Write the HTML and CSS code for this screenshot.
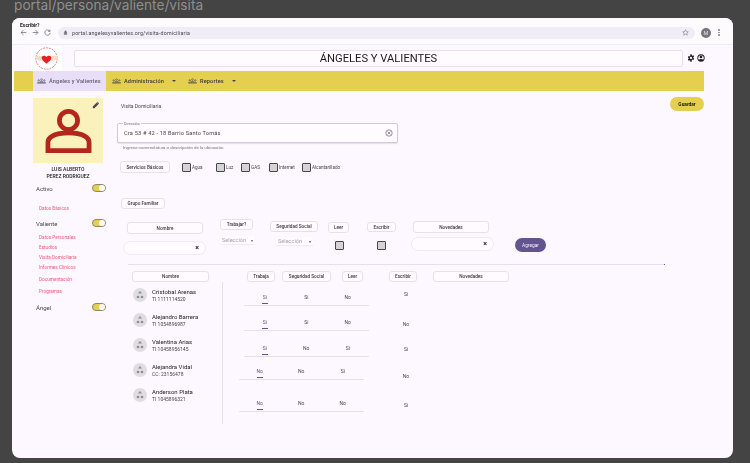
FILE: index.html
```html
<!DOCTYPE html>
<html lang="es">
<head>
  <meta charset="UTF-8">
  <title>Visita Domiciliaria</title>
  <link rel="stylesheet" href="styles.css">
</head>
<body>
  <div class="caption">portal/persona/valiente/visita</div>

  <div class="window">
    <!-- Browser bar -->
    <div class="browser-bar">
      <div class="tab-title">Escribir?</div>
      <div class="browser-nav">
        <svg viewBox="0 0 10 10"><path d="M9 5H1.5M5 1.5 1.500 5 5 8.500"/></svg>
        <svg viewBox="0 0 10 10"><path d="M1 5h7.500M5 1.500 8.500 5 5 8.500"/></svg>
        <svg viewBox="0 0 10 10"><path d="M8.300 3.200A3.800 3.800 0 1 0 8.800 5.500M8.500 1v2.500H6"/></svg>
      </div>
      <div class="address">
        <svg class="lock" viewBox="0 0 10 10"><path d="M2.500 4.500h5v4.500h-5zM3.500 4.500V3a1.500 1.500 0 0 1 3 0v1.500"/></svg>
        <span>portal.angelesyvalientes.org/visita-domiciliaria</span>
        <svg class="star" viewBox="0 0 10 10"><path d="m5 1 1.200 2.700 2.800.3-2.100 1.900.6 2.900L5 7.300 2.500 8.800l.6-2.900L1 4l2.800-.3z"/></svg>
      </div>
      <div class="user-dot">M</div>
      <div class="dots"><i></i><i></i><i></i></div>
    </div>

    <!-- Header -->
    <div class="top">
      <svg class="logo" viewBox="0 0 32 25">
        <rect width="32" height="25" fill="#fff"/>
        <circle cx="16" cy="12.500" r="11" fill="none" stroke="#e8505b" stroke-width=".8" stroke-dasharray="2 1"/>
        <path d="M4 10c4-1 7-.5 9 2-1 2-2 3-3 3-3 0-5-2-6-5zM28 10c-4-1-7-.5-9 2 1 2 2 3 3 3 3 0 5-2 6-5z" fill="#e9e2c8"/>
        <path d="M16 18c-3-2.500-5-4-5-6.200 0-2.400 3.500-3 5-.8 1.500-2.200 5-1.600 5 .8 0 2.200-2 3.700-5 6.200z" fill="#ee1c25"/>
      </svg>
      <div class="app-title">ÁNGELES Y VALIENTES</div>
      <svg class="top-icon" viewBox="0 0 24 24"><path fill-rule="evenodd" d="M10 1h4l.6 3.200 1.800 1 3-1.100 2 3.500-2.400 2.100v2.600l2.400 2.100-2 3.500-3-1.100-1.800 1L14 23h-4l-.6-3.200-1.800-1-3 1.100-2-3.500 2.400-2.100V11.700L2.600 9.600l2-3.500 3 1.100 1.800-1zM12 8.500a3.500 3.500 0 1 0 0 7 3.500 3.500 0 0 0 0-7z"/></svg>
      <svg class="top-icon" viewBox="0 0 24 24"><path fill-rule="evenodd" d="M12 1a11 11 0 1 0 0 22 11 11 0 0 0 0-22zm0 2.500a8.500 8.500 0 0 1 6.700 13.700C17 15.600 14.500 15 12 15s-5 .6-6.700 2.200A8.500 8.500 0 0 1 12 3.500zM12 5a4 4 0 1 0 0 8 4 4 0 0 0 0-8z"/></svg>
    </div>

    <!-- Nav -->
    <nav class="nav">
      <a class="nav-item active">
        <svg viewBox="0 0 16 10"><circle cx="8" cy="2.500" r="1.500"/><circle cx="3" cy="4" r="1.300"/><circle cx="13" cy="4" r="1.300"/><path d="M1 9V7.500h14V9zM5.500 7.500V6h5v1.500"/></svg>
        Ángeles y Valientes
      </a>
      <a class="nav-item">
        <svg viewBox="0 0 16 10"><circle cx="8" cy="2.500" r="1.500"/><circle cx="3" cy="4" r="1.300"/><circle cx="13" cy="4" r="1.300"/><path d="M1 9V7.500h14V9zM5.500 7.500V6h5v1.500"/></svg>
        Administración <b class="caret"></b>
      </a>
      <a class="nav-item">
        <svg viewBox="0 0 16 10"><circle cx="8" cy="2.500" r="1.500"/><circle cx="3" cy="4" r="1.300"/><circle cx="13" cy="4" r="1.300"/><path d="M1 9V7.500h14V9zM5.500 7.500V6h5v1.500"/></svg>
        Reportes <b class="caret"></b>
      </a>
    </nav>

    <div class="main">
      <!-- Sidebar -->
      <aside class="side">
        <div class="photo">
          <svg class="person" viewBox="0 0 48 46">
            <circle cx="24" cy="12" r="9.500" fill="none" stroke="#b3261e" stroke-width="5"/>
            <path d="M2.500 43.500V35c0-5 6-10 21.500-10s21.500 5 21.500 10v8.500z" fill="none" stroke="#b3261e" stroke-width="5"/>
          </svg>
          <svg class="pencil" viewBox="0 0 10 10"><path d="M1 9V7l5-5 2 2-5 5zM7 1l2 2-.7.700-2-2z"/></svg>
        </div>
        <div class="person-name">LUIS ALBERTO<br>PEREZ RODRIGUEZ</div>

        <div class="switch-row first"><span>Activo</span><span class="toggle"></span></div>
        <a class="side-link basic">Datos Básicos</a>
        <div class="switch-row valiente"><span>Valiente</span><span class="toggle"></span></div>
        <div class="side-links">
          <a class="side-link">Datos Personales</a>
          <a class="side-link">Estudios</a>
          <a class="side-link">Visita Domiciliaria</a>
          <a class="side-link">Informes Clínicos</a>
          <a class="side-link wide">Documentación</a>
          <a class="side-link wide">Programas</a>
        </div>
        <div class="switch-row angel"><span>Ángel</span><span class="toggle"></span></div>
      </aside>

      <!-- Content -->
      <section class="content">
        <div class="title-row">
          <span class="page-title">Visita Domiciliaria</span>
          <button class="save">Guardar</button>
        </div>

        <div class="field">
          <span class="field-label">Dirección</span>
          <span class="field-value">Cra 53 # 42 - 18 Barrio Santo Tomás</span>
          <svg class="clear" viewBox="0 0 10 10"><circle cx="5" cy="5" r="4"/><path d="m3.200 3.200 3.600 3.600M6.800 3.200 3.200 6.800"/></svg>
        </div>
        <div class="help">Ingrese nomenclatura o descripción de la ubicación.</div>

        <div class="services">
          <span class="chip services-chip">Servicios Básicos</span>
          <label class="check agua"><i></i>Agua</label>
          <label class="check luz"><i></i>Luz</label>
          <label class="check gas"><i></i>GAS</label>
          <label class="check internet"><i></i>Internet</label>
          <label class="check"><i></i>Alcantarillado</label>
        </div>

        <span class="chip family-chip">Grupo Familiar</span>

        <div class="add-row">
          <div class="col c-name">
            <span class="chip">Nombre</span>
            <div class="pill"><b>×</b></div>
          </div>
          <div class="col c-work">
            <span class="chip">Trabajar?</span>
            <div class="select">Selección <b>▾</b></div>
          </div>
          <div class="col c-social">
            <span class="chip">Seguridad Social</span>
            <div class="select">Selección <b>▾</b></div>
          </div>
          <div class="col c-read">
            <span class="chip">Leer</span>
            <i class="box"></i>
          </div>
          <div class="col c-write">
            <span class="chip">Escribir</span>
            <i class="box"></i>
          </div>
          <div class="col c-news">
            <span class="chip">Novedades</span>
            <div class="pill"><b>×</b></div>
          </div>
          <button class="add">Agregar</button>
        </div>

        <div class="divider"></div>

        <div class="list-head">
          <span class="chip h-name">Nombre</span>
          <span class="chip h-work">Trabaja</span>
          <span class="chip h-social">Seguridad Social</span>
          <span class="chip h-read">Leer</span>
          <span class="chip h-write">Escribir</span>
          <span class="chip h-news">Novedades</span>
        </div>

        <div class="family">
          <div class="people">
            <div class="person-row">
              <svg class="shapes" viewBox="0 0 14 14"><circle cx="7" cy="7" r="7" fill="#dfdde2"/><path d="m7 3 2 2.500H5z" fill="#8f8d92"/><circle cx="5" cy="9" r="1.300" fill="#8f8d92"/><circle cx="9" cy="9" r="1.300" fill="#8f8d92"/></svg>
              <div><strong>Cristobal Arenas</strong><small>TI 1111114520</small></div>
            </div>
            <div class="person-row">
              <svg class="shapes" viewBox="0 0 14 14"><circle cx="7" cy="7" r="7" fill="#dfdde2"/><path d="m7 3 2 2.500H5z" fill="#8f8d92"/><circle cx="5" cy="9" r="1.300" fill="#8f8d92"/><circle cx="9" cy="9" r="1.300" fill="#8f8d92"/></svg>
              <div><strong>Alejandro Barrera</strong><small>TI 1054896987</small></div>
            </div>
            <div class="person-row">
              <svg class="shapes" viewBox="0 0 14 14"><circle cx="7" cy="7" r="7" fill="#dfdde2"/><path d="m7 3 2 2.500H5z" fill="#8f8d92"/><circle cx="5" cy="9" r="1.300" fill="#8f8d92"/><circle cx="9" cy="9" r="1.300" fill="#8f8d92"/></svg>
              <div><strong>Valentina Arias</strong><small>TI 10458956145</small></div>
            </div>
            <div class="person-row">
              <svg class="shapes" viewBox="0 0 14 14"><circle cx="7" cy="7" r="7" fill="#dfdde2"/><path d="m7 3 2 2.500H5z" fill="#8f8d92"/><circle cx="5" cy="9" r="1.300" fill="#8f8d92"/><circle cx="9" cy="9" r="1.300" fill="#8f8d92"/></svg>
              <div><strong>Alejandra Vidal</strong><small>CC: 23156478</small></div>
            </div>
            <div class="person-row">
              <svg class="shapes" viewBox="0 0 14 14"><circle cx="7" cy="7" r="7" fill="#dfdde2"/><path d="m7 3 2 2.500H5z" fill="#8f8d92"/><circle cx="5" cy="9" r="1.300" fill="#8f8d92"/><circle cx="9" cy="9" r="1.300" fill="#8f8d92"/></svg>
              <div><strong>Anderson Plata</strong><small>TI 1045896321</small></div>
            </div>
          </div>

          <div class="answers">
            <div class="answer r1"><span class="on">Si</span><span>Si</span><span>No</span></div>
            <div class="answer r2"><span class="on">Si</span><span>Si</span><span>No</span></div>
            <div class="answer r3"><span class="on">Si</span><span>No</span><span>Si</span></div>
            <div class="answer r4"><span class="on">No</span><span>No</span><span>Si</span></div>
            <div class="answer r5"><span class="on">No</span><span>No</span><span>No</span></div>
          </div>

          <div class="writes">
            <span class="w1">Si</span>
            <span class="w2">No</span>
            <span class="w3">Si</span>
            <span class="w4">No</span>
            <span class="w5">Si</span>
          </div>
        </div>
      </section>
    </div>
  </div>
</body>
</html>
```

FILE: styles.css
```css
* {
  box-sizing: border-box;
}
html, body {
  height: 100%;
}
body {
  margin: 0;
  background-color: #444444;
  font-family: Roboto, "Liberation Sans", sans-serif;
  color: #1d1b20;
  overflow: hidden;
}
.caption {
  height: 18px;
  padding-left: 14px;
  margin-top: -4px;
  font-family: Inter, sans-serif;
  font-size: 13.700px;
  line-height: 18px;
  white-space: nowrap;
  color: #8e8e8e;
}
.window {
  width: 721px;
  height: 440px;
  margin-left: 12px;
  margin-top: 4px;
  background-color: #fdf7ff;
  border-radius: 8px;
  overflow: hidden;
  filter: blur(.3px); /* the reference is a scaled down mockup */
}

/* browser bar */
.browser-bar {
  position: relative;
  display: flex;
  align-items: center;
  height: 27px;
  padding: 3px 0 0 8px;
  border-bottom: 1px solid #f0ebf3;
  background-color: #fefbff;
}
.tab-title {
  position: absolute;
  left: 8px;
  top: 4px;
  font-size: 5px;
  font-weight: 700;
  line-height: 6px;
}
.browser-nav {
  display: flex;
  gap: 5px;
  width: 38px;
}
.browser-nav svg {
  width: 7px;
  height: 7px;
  fill: none;
  stroke: #5f6368;
  stroke-width: 1;
}
.address {
  display: flex;
  align-items: center;
  width: 637px;
  height: 12px;
  padding: 0 5px;
  border-radius: 6px;
  background-color: #f1edf6;
  font-size: 5.300px;
  letter-spacing: .17px;
  color: #49454f;
}
.address .lock {
  width: 5px;
  height: 5px;
  margin-right: 4px;
  fill: #777;
  stroke: #777;
}
.address span {
  flex: 1;
}
.address .star {
  width: 7px;
  height: 7px;
  margin-right: 1px;
  fill: none;
  stroke: #777;
  stroke-width: .8;
}
.user-dot {
  width: 10px;
  height: 10px;
  margin-left: 6px;
  border-radius: 50%;
  background-color: #77747b;
  color: #e6e1e5;
  font-size: 5.500px;
  line-height: 10px;
  text-align: center;
}
.dots {
  display: flex;
  flex-direction: column;
  gap: 1px;
  margin-left: 7px;
}
.dots i {
  width: 1.500px;
  height: 1.500px;
  border-radius: 50%;
  background-color: #8b8b8b;
}

/* header */
.top {
  display: flex;
  align-items: center;
  height: 26px;
  padding-left: 19px;
}
.logo {
  width: 31px;
  height: 25px;
  margin-top: 1px;
}
.app-title {
  width: 609px;
  height: 17px;
  margin-left: 12px;
  border: 1px solid #e7e0ec;
  border-radius: 2px;
  background-color: #fffbff;
  font-size: 11.200px;
  line-height: 15px;
  text-align: center;
}
.top-icon {
  width: 8px;
  height: 8px;
  margin-left: 4px;
  fill: #1d1b20;
}
.top-icon + .top-icon {
  margin-left: 2px;
}

/* nav */
.nav {
  display: flex;
  width: 690px;
  height: 20px;
  margin-left: 2px;
  padding-left: 19px;
  background-color: #e5cf4e;
}
.nav-item {
  display: flex;
  align-items: center;
  padding: 0 5px 0 6px;
  font-size: 5.600px;
  letter-spacing: .15px;
  font-weight: 500;
  white-space: nowrap;
  color: #3a3838;
}
.nav-item svg {
  width: 9px;
  height: 6px;
  margin-right: 3px;
  fill: none;
  stroke: #4a4850;
  stroke-width: 1;
}
.nav-item.active {
  width: 73px;
  padding-left: 4px;
  background-color: #e8def8;
  color: #625b71;
}
.nav-item + .nav-item {
  width: 76px;
}
.caret {
  width: 0;
  height: 0;
  margin-left: 8px;
  border: 2px solid transparent;
  border-top: 2.500px solid #49454f;
  border-bottom: 0;
}

/* layout */
.main {
  display: flex;
  padding-left: 21px;
}

/* sidebar */
.side {
  width: 87px;
  padding-top: 7px;
}
.photo {
  position: relative;
  display: flex;
  align-items: center;
  justify-content: center;
  width: 70px;
  height: 65px;
  background-color: #fbf1bd;
}
.person {
  width: 47px;
  height: 44px;
}
.pencil {
  position: absolute;
  top: 3px;
  right: 3px;
  width: 8px;
  height: 8px;
  fill: #49454f;
}
.person-name {
  width: 70px;
  margin-top: 3px;
  font-size: 5px;
  font-weight: 500;
  line-height: 7px;
  text-align: center;
}
.switch-row {
  display: flex;
  align-items: center;
  justify-content: space-between;
  width: 73px;
  height: 10px;
  padding-left: 3px;
  font-size: 6px;
  color: #49454f;
}
.switch-row.first {
  margin-top: 3px;
}
.switch-row.valiente {
  margin-top: 4px;
}
.switch-row.angel {
  margin-top: 5px;
}
.toggle {
  position: relative;
  width: 14px;
  height: 8px;
  border: 1px solid #8d8a6a;
  border-radius: 4px;
  background-color: #e5cf4e;
}
.toggle::after {
  content: "";
  position: absolute;
  top: 0;
  right: 0;
  width: 6px;
  height: 6px;
  border-radius: 50%;
  background-color: #fdf7ff;
}
.side-link {
  display: block;
  height: 10px;
  padding-left: 6px;
  font-size: 4.700px;
  line-height: 10px;
  color: #ef5a73;
}
.side-link.basic {
  margin-top: 11px;
}
.side-links {
  margin-top: 5px;
}
.side-link.wide {
  margin-top: 2px;
}

/* content */
.content {
  width: 584px;
  padding-top: 6px;
}
.title-row {
  display: flex;
  align-items: center;
  justify-content: space-between;
  height: 14px;
  padding-left: 1px;
  font-size: 5px;
  color: #49454f;
}
.page-title {
  padding-top: 4px;
}
.save {
  width: 34px;
  height: 14px;
  padding: 0;
  border: none;
  border-radius: 7px;
  background-color: #e5cf4e;
  font-family: inherit;
  font-size: 4.800px;
  font-weight: 700;
  color: #1d1b20;
}
.field {
  position: relative;
  display: flex;
  align-items: center;
  justify-content: space-between;
  width: 281px;
  height: 20px;
  margin: 12px 0 0 -3px;
  padding: 0 4px 0 6px;
  border: 1px solid #cfcad4;
  border-radius: 2px;
  background-color: #fffbff;
  box-shadow: 0 1px 1px #e5dfe9;
}
.field-label {
  position: absolute;
  left: 5px;
  top: -3px;
  padding: 0 1px;
  background-color: #fdf7ff;
  font-size: 3.800px;
  line-height: 5px;
  color: #79747e;
}
.field-value {
  font-size: 5.600px;
  letter-spacing: .2px;
  color: #49454f;
}
.clear {
  width: 8px;
  height: 8px;
  fill: none;
  stroke: #49454f;
  stroke-width: .7;
}
.help {
  height: 7px;
  margin: 1px 0 0 3px;
  font-size: 4.400px;
  line-height: 7px;
  color: #79747e;
}
.chip {
  display: flex;
  align-items: center;
  justify-content: center;
  height: 11px;
  border: 1px solid #e7e0ec;
  border-radius: 3px;
  background-color: #fffbff;
  font-size: 4.700px;
  font-weight: 500;
  white-space: nowrap;
  color: #3a383e;
}
.services {
  display: flex;
  align-items: center;
  margin-top: 10px;
}
.services-chip {
  width: 50px;
  height: 12px;
}
.check {
  display: flex;
  align-items: center;
  font-size: 4.600px;
  color: #49454f;
}
.check i, .box {
  display: block;
  width: 9px;
  height: 9px;
  margin-right: 1px;
  border: 1px solid #49454f;
  border-radius: 1px;
  background-color: #d5d3d6;
}
.check.agua {
  width: 34px;
  margin-left: 12px;
}
.check.luz {
  width: 25px;
}
.check.gas {
  width: 28px;
}
.check.internet {
  width: 33px;
}
.family-chip {
  width: 44px;
  margin: 25px 0 0 1px;
}
.add-row {
  display: flex;
  align-items: flex-start;
  margin-top: 10px;
  height: 35px;
}
.col {
  display: flex;
  flex-direction: column;
  flex: none;
}
.pill {
  display: flex;
  align-items: center;
  justify-content: flex-end;
  width: 83px;
  height: 14px;
  padding-right: 6px;
  border: 1px solid #efe9f3;
  border-radius: 7px;
  background-color: #fffbff;
  font-size: 7px;
  color: #1d1b20;
}
.select {
  display: flex;
  align-items: center;
  justify-content: space-between;
  padding: 0 2px;
  height: 8px;
  border-radius: 1px;
  background-color: #fffbff;
  box-shadow: 0 1px 1px #f0eaf3;
  font-size: 5.600px;
  color: #a5a2a8;
}
.select b {
  font-size: 4px;
  color: #79747e;
}
.c-name {
  width: 83px;
  margin-left: 3px;
  padding-top: 3px;
}
.c-name .chip {
  width: 76px;
  height: 12px;
  margin: 0 0 7px 4px;
}
.c-work {
  width: 35px;
  margin-left: 14px;
}
.c-work .chip {
  width: 33px;
  margin-bottom: 6px;
}
.c-social {
  width: 48px;
  margin-left: 15px;
  padding-top: 2px;
}
.c-social .chip {
  margin-bottom: 5px;
}
.c-social .select {
  width: 37px;
  margin-left: 6px;
}
.c-read {
  width: 21px;
  margin-left: 10px;
  padding-top: 3px;
}
.c-read .chip {
  margin-bottom: 8px;
}
.c-read .box {
  margin-left: 7px;
}
.c-write {
  width: 29px;
  margin-left: 18px;
  padding-top: 3px;
}
.c-write .chip {
  height: 10px;
  margin-bottom: 9px;
}
.c-write .box {
  margin-left: 10px;
}
.c-news {
  width: 83px;
  margin-left: 15px;
  padding-top: 2px;
}
.c-news .chip {
  width: 76px;
  height: 12px;
  margin: 0 0 4px 2px;
}
.add {
  width: 31px;
  height: 14px;
  margin: 19px 0 0 21px;
  padding: 0;
  border: none;
  border-radius: 7px;
  background-color: #63548f;
  font-family: inherit;
  font-size: 4.800px;
  color: #f3eefc;
}
.divider {
  position: relative;
  width: 537px;
  height: 1.500px;
  margin: 9.500px 0 0 8px;
  background-color: #e6dff3;
}
.divider::after {
  content: "";
  position: absolute;
  right: 0;
  top: 0;
  width: 1px;
  height: 1px;
  background-color: #63548f;
}
.list-head {
  display: flex;
  align-items: center;
  margin-top: 5.500px;
}
.h-name {
  width: 77px;
  margin-left: 12px;
}
.h-work {
  width: 28px;
  margin-left: 38px;
}
.h-social {
  width: 49px;
  margin-left: 7px;
}
.h-read {
  width: 21px;
  margin-left: 11px;
}
.h-write {
  width: 28px;
  margin-left: 26px;
}
.h-news {
  width: 76px;
  margin-left: 16px;
}

/* family list */
.family {
  display: flex;
  height: 142px;
}
.people {
  flex: none;
  width: 90px;
  height: 142px;
  margin-left: 13px;
  padding-top: 1px;
  border-right: 1px solid #e6dff3;
}
.person-row {
  display: flex;
  align-items: center;
  gap: 5px;
  height: 25px;
}
.shapes {
  width: 14px;
  height: 14px;
  flex: none;
}
.person-row strong {
  display: block;
  font-size: 6px;
  font-weight: 400;
  line-height: 8px;
  white-space: nowrap;
  color: #1d1b20;
}
.person-row small {
  display: block;
  font-size: 5px;
  line-height: 7px;
  white-space: nowrap;
  color: #49454f;
}
.answers {
  width: 125px;
  margin-left: 21px;
  flex: none;
}
.answer {
  display: flex;
  width: 125px;
  height: 13px;
  border-bottom: 1px solid #e6e0e9;
  font-size: 5px;
  line-height: 8px;
  color: #49454f;
}
.answer span {
  width: 41.500px;
  text-align: center;
}
.answer .on {
  position: relative;
  color: #63548f;
}
.answer .on::after {
  content: "";
  position: absolute;
  left: 18px;
  top: 10.500px;
  width: 6px;
  height: 1px;
  background-color: #63548f;
}
.r1 {
  margin-top: 11px;
}
.r2 {
  margin-top: 12px;
}
.r3 {
  margin-top: 13px;
}
.r4 {
  margin-top: 10px;
  margin-left: -5px;
}
.r5 {
  margin-top: 19px;
  margin-left: -5px;
}
.writes {
  display: flex;
  flex-direction: column;
  margin-left: 30px;
  font-size: 5px;
  line-height: 6px;
  color: #49454f;
}
.writes span {
  width: 14px;
  text-align: center;
}
.w1 {
  margin-top: 9px;
}
.w2 {
  margin-top: 24px;
}
.w3 {
  margin-top: 19px;
}
.w4 {
  margin-top: 21px;
}
.w5 {
  margin-top: 23px;
}
```
